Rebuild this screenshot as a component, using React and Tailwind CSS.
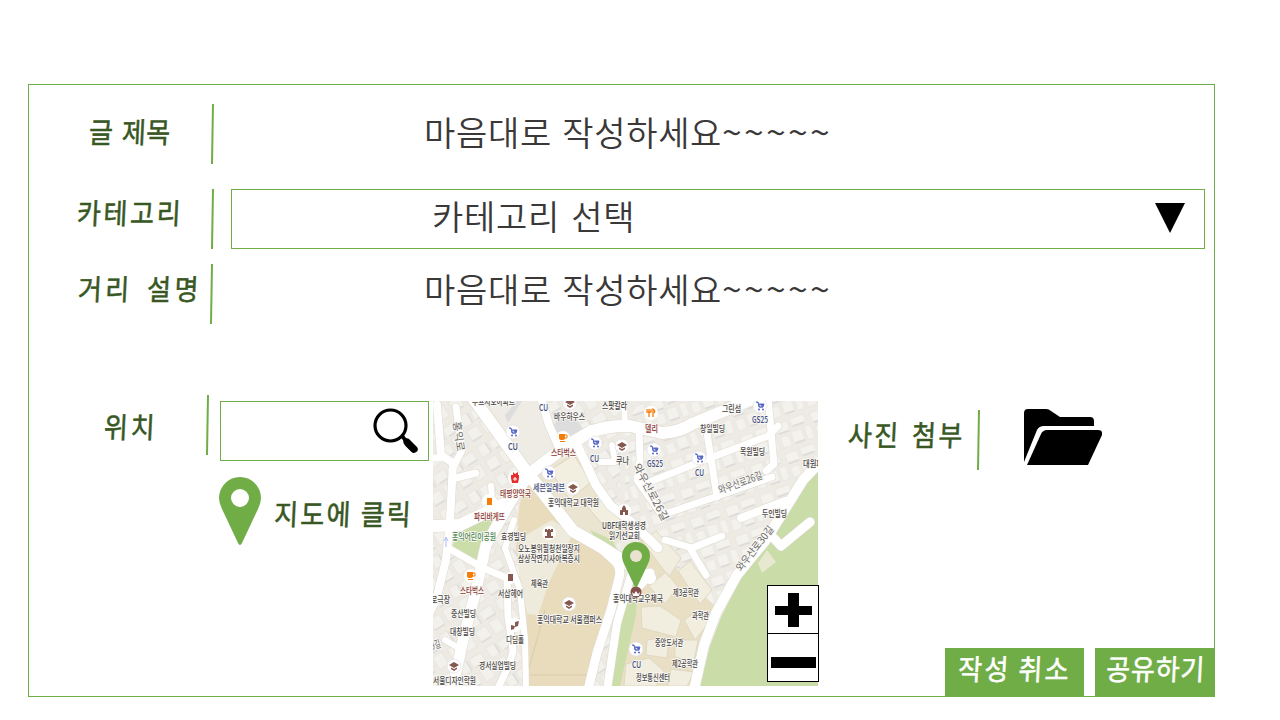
import React from "react";

const ROADS = [
  ["M473 398L526 471L573 531L603 548L650 578", 12],
  ["M603 550L614 560Q622 567 619 578L611 610L597 653L588 690", 9],
  ["M632 572L617 623L607 690", 8],
  ["M430 526L460 525L510 501L528 475L563 448L590 432Q610 425 630 426L662 433Q680 432 692 424L760 396", 12],
  ["M513 497L486 545L476 590L463 640L452 690", 11],
  ["M448 548L483 568L507 578L508 617L513 650Q512 660 497 690", 7],
  ["M514 520L505 548L520 590L525 640L526 690", 6],
  ["M541 398L549 425L560 450", 8],
  ["M577 445L596 485L610 505L630 521L658 548", 9],
  ["M437 405L441 455L453 463L450 520L446 560L436 600L430 612", 8],
  ["M456 407L462 450L452 470M452 479L476 473M430 458L441 458", 7],
  ["M491 486L492 498L500 507M445 640L462 650L458 670", 6],
  ["M639 430L640 459L637 480L662 515L712 498L772 477", 7],
  ["M642 485L702 461L768 436L778 426M707 433L717 497", 7],
  ["M768 398L774 464L766 471", 7],
  ["M741 518L785 501", 8],
  ["M590 428L625 426L624 400M612 445L615 462L600 462", 6],
  ["M665 540L692 548L722 536M691 550L706 575", 7],
  ["M822 460L803 480L785 509L765 541L737 575L716 613L704 645L694 690", 10],
  ["M769 533L781 546L810 522M640 585L650 573", 9],
];

const LABELS = [
  ["두프지오아파트", 472, 405, 43],
  ["CU", 539, 411, 9, "b"],
  ["바우하우스", 554, 420, 31],
  ["스팟칼라", 602, 409, 25],
  ["그린섬", 722, 412, 19],
  ["GS25", 752, 423, 16, "b"],
  ["CU", 508, 450, 10, "b"],
  ["스타벅스", 551, 456, 25, "r"],
  ["CU", 590, 462, 9, "b"],
  ["쿠나", 616, 464, 13],
  ["델리", 645, 432, 13, "r"],
  ["창일빌딩", 700, 432, 25],
  ["GS25", 647, 467, 16, "b"],
  ["CU", 695, 476, 9, "b"],
  ["목원빌딩", 740, 455, 25],
  ["대원파", 803, 467, 20],
  ["세븐일레븐", 533, 491, 32, "b"],
  ["태평양약국", 500, 497, 31, "r"],
  ["홍익대학교 대학원", 548, 506, 51],
  ["파리바게뜨", 474, 520, 31, "r"],
  ["UBF대학생성경", 602, 529, 44],
  ["읽기선교회", 609, 539, 31],
  ["두인빌딩", 762, 517, 25],
  ["홍익어린이공원", 452, 540, 44, "g"],
  ["효경빌딩", 501, 540, 25],
  ["오노봉위필청천일장지", 518, 552, 62],
  ["삼상작연지사아복증시", 518, 562, 62],
  ["체육관", 531, 587, 17],
  ["스타벅스", 460, 594, 24, "r"],
  ["서삽헤어", 498, 597, 25],
  ["로극장", 431, 603, 19],
  ["중산빌딩", 451, 617, 25],
  ["대창빌딩", 450, 635, 25],
  ["디딤홀", 506, 643, 18],
  ["홍익대학교 서울캠퍼스", 537, 623, 65],
  ["경서실업빌딩", 479, 669, 37],
  ["서울디자인학원", 433, 684, 43],
  ["홍익대학교우체국", 613, 602, 50],
  ["제3공학관", 673, 596, 26],
  ["과학관", 692, 619, 17],
  ["중앙도서관", 655, 646, 28],
  ["제2공학관", 672, 667, 26],
  ["CU", 632, 668, 9, "b"],
  ["정보통신센터", 636, 681, 34],
];

const INK = { b: "#414c7d", r: "#8c3a38", g: "#4d8550", k: "#494745" };

const STREETS = [
  ["홍익로", 453, 422, 30, 82],
  ["와우산로26길", 633, 466, 63, 62],
  ["와우산로26길", 720, 494, 46, -20],
  ["와우산로30길", 741, 572, 54, -52],
  ["9길", 432, 650, 10, -18],
];

const CARTS = [[513, 432], [595, 443], [549, 473], [760, 406], [654, 450], [699, 458], [636, 649]];
const SCHOOLS = [[570, 403], [622, 446], [573, 488], [569, 604], [454, 666]];
const CUPS = [[563, 438], [471, 576]];

function CityMap() {
  return (
    <svg className="block h-[285px] w-[385px]" viewBox="433 401 385 285" fontFamily='"Noto Sans CJK KR", sans-serif'>
      <defs>
        <pattern id="blocksA" width="37" height="31" patternUnits="userSpaceOnUse" patternTransform="rotate(-19)">
          <path d="M2 3h13v10H2zM18 2h15v8H18zM3 17h9v11H3zM15 15h11v12H15zM29 14h7v14h-7z" fill="#f4f2ed" stroke="#e5e2dc" strokeWidth=".7" />
          <path d="M3 13h11M19 10h12M16 27h10" stroke="#cfced2" strokeWidth="1" />
        </pattern>
        <pattern id="blocksB" width="33" height="35" patternUnits="userSpaceOnUse" patternTransform="rotate(-32)">
          <path d="M2 2h10v12H2zM15 3h14v10H15zM2 18h12v12H2zM18 17h11v14H18z" fill="#f3f1eb" stroke="#e2dfd8" strokeWidth=".7" />
          <path d="M12 3v11M18 13h11M2 30h11" stroke="#d4d3d6" strokeWidth="1" />
        </pattern>
      </defs>
      <rect x="433" y="401" width="385" height="285" fill="#eeebe5" />
      <path d="M433 401H620V686H433Z" fill="url(#blocksB)" />
      <path d="M625 425L640 401H818V520L700 640L625 530Z" fill="url(#blocksA)" />
      <path d="M487 401H541L556 447L526 468Z" fill="#efece5" />
      <path d="M505 415L517 401H522L508 423ZM553 425L569 410L584 430L564 441Z" fill="#deddde" />
      <path d="M533 476L577 450L630 530L614 545L574 530Z" fill="#eae4d1" />
      <path d="M550 470L574 455L591 482L570 500ZM586 505L600 493L621 521L609 532Z" fill="#f2eee0" stroke="#ded6bf" />
      <path d="M526 480L570 533L600 550L617 571L608 616L590 686H528L527 620L516 550L519 507Z" fill="#e8dcbc" />
      <path d="M521 538L552 520L573 534L550 580L538 615L527 614L517 560Z" fill="#eeebdd" />
      <path d="M545 610L528 672M528 675H588" stroke="#d9ccab" fill="none" />
      <path d="M640 535L716 607L693 686H610L632 590Z" fill="#e9dfc5" />
      <path d="M642 541L656 531L681 558L669 577ZM678 571L690 561L712 590L700 604ZM649 586L666 572L678 587L665 604ZM641 607L660 606L681 620L676 637L642 628ZM684 620L700 609L711 620L695 640ZM647 640L669 637L667 658L646 655ZM675 640L698 640L694 662L675 657ZM626 664L649 658L664 671L656 686H624ZM671 669L694 672L687 686H668Z" fill="#f2eedf" stroke="#dfd8c3" />
      <path d="M459 529L500 512L484 548L476 562L451 550Z" fill="#cbdda8" />
      <path d="M590 530L612 540L618 551L600 545ZM626 581L638 574L636 615L620 686H609L616 635Z" fill="#cbdda8" />
      <path d="M818 470L803 487L785 515L767 545L740 580L722 615L710 646L700 686H818Z" fill="#cadca7" />
      <path d="M758 563L767 550L776 562L762 573Z" fill="#e6e8d0" />
      <g fill="none" strokeLinecap="round" strokeLinejoin="round">
        {ROADS.map(([d, w]) => <path key={d} d={d} stroke="#dfdcd2" strokeWidth={w + 1.2} />)}
        {ROADS.map(([d, w]) => <path key={d} d={d} stroke="#fff" strokeWidth={w} />)}
      </g>
      <path d="M446 547v-9m-2 3 2-4 2 4" stroke="#a8bdf3" fill="none" />
      {CARTS.map(([x, y]) => (
        <g key={x + "-" + y} transform={`translate(${x} ${y})`}>
          <circle r="7" fill="#fff" stroke="#e3e0e2" strokeWidth=".7" />
          <path d="M-4-4h2l1.5 5H3M-1.5-2H4L3 1H-1Z" fill="#5968c5" stroke="#5968c5" />
          <circle cx="-1" cy="3.5" r="1" fill="#5968c5" /><circle cx="3" cy="3.5" r="1" fill="#5968c5" />
        </g>
      ))}
      {SCHOOLS.map(([x, y]) => (
        <g key={x + "-" + y} transform={`translate(${x} ${y})`}>
          <circle r="7" fill="#fff" stroke="#e3e0e2" strokeWidth=".7" />
          <path d="M-5-1L0-4L5-1L0 2ZM-3 1.500L0 3L3 1.500V3L0 5L-3 3Z" fill="#85594f" />
        </g>
      ))}
      {CUPS.map(([x, y]) => (
        <g key={x} transform={`translate(${x} ${y})`}>
          <circle r="7" fill="#fff" />
          <path d="M-4-4H2V0Q2 2-1 2Q-4 2-4 0ZM-3 3H2V4H-3Z" fill="#f77d0b" />
          <path d="M2-3H4V0H2" fill="none" stroke="#f77d0b" />
        </g>
      ))}
      <circle cx="515" cy="478" r="7" fill="#fff" />
      <path d="M511 475h8v3l-1 5h-6l-1-5ZM513 472l2 2 3-2v3h-5Z" fill="#e52e2b" />
      <path d="M515 477v4m-2-2h4" stroke="#fff" />
      <circle cx="489" cy="501" r="7" fill="#fff" />
      <rect x="487" y="498" width="5" height="7" fill="#f77d0b" />
      <circle cx="651" cy="413" r="7" fill="#fff" />
      <path d="M649 409v8m-2-8v3h4v-3m2 8v-8q3 2 1 4" stroke="#f77d0b" strokeWidth="1.3" fill="none" />
      <circle cx="549" cy="533" r="7" fill="#fff" />
      <path d="M545 529h2v1h1v-1h2v1h1v-1h2v3h-2v4h2v2h-8v-2h2v-4h-2Z" fill="#85594f" />
      <circle cx="624" cy="511" r="7" fill="#fff" />
      <path d="M620 515v-5h2v-2l2-3 2 3v2h2v5h-3v-3h-2v3Z" fill="#85594f" />
      <circle cx="511" cy="578" r="6" fill="#fff" />
      <rect x="508" y="574" width="5" height="7" fill="#85594f" />
      <circle cx="515" cy="625" r="7" fill="#fff" />
      <path d="M515 622l4-1-1 5-3 1ZM511 625l4 1-1 3-3 1Z" fill="#85594f" />
      {STREETS.map(([t, x, y, w, r], i) => (
        <text key={i} x={x} y={y} transform={`rotate(${r} ${x} ${y})`} fontSize="10.5" textLength={w} lengthAdjust="spacingAndGlyphs" fill="#6b6968" stroke="#faf9f6" strokeWidth="2" paintOrder="stroke">{t}</text>
      ))}
      {LABELS.map(([t, x, y, w, c], i) => (
        <text key={i} x={x} y={y} fontSize="9.5" fontWeight="500" textLength={w} lengthAdjust="spacingAndGlyphs" fill={INK[c || "k"]} stroke="#faf9f6" strokeWidth="1.8" paintOrder="stroke">{t}</text>
      ))}
      <circle cx="636" cy="592" r="5.500" fill="#85504b" />
      <path d="M632 592l2 2 2-3 2 3 2-2-1 4h-6Z" fill="#fff" />
      <path d="M622 556A14 14 0 0 1 650 556Q650 560 647 566L637.500 586Q636 588.500 634.500 586L625 566Q622 560 622 556Z" fill="#70ad47" />
      <circle cx="636" cy="556" r="6" fill="#e9e2d0" />
    </svg>
  );
}

function Divider({ className = "" }) {
  return (
    <svg className={"h-[60px] w-[3px] shrink-0 " + className} viewBox="0 0 3 60">
      <path d="M2 0L1 60" stroke="#70ad47" strokeWidth="2" />
    </svg>
  );
}

function Label({ children, className = "" }) {
  return (
    <span className={"block shrink-0 -skew-x-3 scale-y-110 whitespace-pre text-[26px] leading-[30px] font-normal [-webkit-text-stroke:0.5px_currentColor] " + className}>
      {children}
    </span>
  );
}

function Placeholder() {
  return (
    <p className="-mt-[2px] ml-[210px] text-[34px] leading-[60px] font-[350] whitespace-pre tracking-[0.7px] text-[#3b3838] [word-spacing:2px]">
      마음대로 작성하세요<span className="text-[36px] leading-[20px] tracking-[2.2px]">~~~~~</span>
    </p>
  );
}

export default function App() {
  return (
    <main className="h-[720px] w-[1280px] overflow-hidden bg-white pt-[84px] pl-7 font-['Noto_Sans_CJK_KR',sans-serif]">
      <section className="flex h-[613px] w-[1187px] flex-col border border-[#70ad47] text-[#385723]">
        <div className="mt-[19px] flex h-[60px]">
          <div className="w-[182px] pt-3 pl-[60px]"><Label className="tracking-[0.2px] [word-spacing:3px]">글 제목</Label></div>
          <Divider />
          <Placeholder />
        </div>
        <div className="mt-[25px] flex h-[60px]">
          <div className="w-[182px] pt-2 pl-[48px]"><Label className="tracking-[2.7px]">카테고리</Label></div>
          <Divider />
          <button className="ml-[17px] flex w-[974px] items-center justify-between border border-[#70ad47] pr-[19px] pl-[200px]">
            <span className="-mt-[7px] text-[34px] leading-[50px] font-[350] tracking-[0.7px] whitespace-pre text-[#3b3838] [word-spacing:3px]">카테고리 선택</span>
            <svg className="-mt-[3px] h-[30px] w-[30px]" viewBox="0 0 30 30"><path d="M0 0H30L15 30Z" fill="#000" /></svg>
          </button>
        </div>
        <div className="mt-[15px] flex h-[60px]">
          <div className="w-[181px] pt-[9px] pl-[49px]"><Label className="tracking-[3.5px] [word-spacing:5px]">거리 설명</Label></div>
          <Divider />
          <div className="-mt-[3px] ml-px"><Placeholder /></div>
        </div>
        <div className="mt-[71px] flex h-[301px]">
          <div className="w-[178px] shrink-0 pt-[16px] pl-[75px]"><Label className="tracking-[3px]">위치</Label></div>
          <Divider className="-ml-px" />
          <div className="mt-[6px] ml-[11px] w-[209px] shrink-0">
            <div className="flex h-[60px] w-[209px] items-center justify-end border border-[#70ad47] pr-[9px]">
              <svg className="h-[48px] w-[48px]" viewBox="0 0 48 48">
                <circle cx="19.500" cy="18.500" r="15.500" fill="none" stroke="#000" strokeWidth="3.200" />
                <path d="M29 30L32 27L35 31Q38 31 40 34L45.500 39.500Q48 42 46 44.500Q43 47 40.500 45L34 38.500Q32 36 32 33Z" fill="#000" />
              </svg>
            </div>
            <div className="mt-[15px] flex">
              <svg className="-ml-px h-[70px] w-[42px] shrink-0" viewBox="0 0 42 70">
                <path fillRule="evenodd" d="M0 22A21 21 0 0 1 42 22Q42 27 39 33L23 67Q21 71 19 67L3 33Q0 27 0 22ZM12 22A9 9 0 1 0 30 22A9 9 0 1 0 12 22Z" fill="#70ad47" />
              </svg>
              <Label className="mt-[23px] ml-[13px] tracking-[2.2px]">지도에 클릭</Label>
            </div>
          </div>
          <div className="relative mt-[6px] ml-1 h-[285px] w-[385px] shrink-0">
            <CityMap />
            <div className="absolute -right-px bottom-1 flex h-[97px] w-[52px] flex-col border border-black bg-white">
              <button className="flex h-12 items-center justify-center border-b border-black">
                <svg className="h-[34px] w-[37px]" viewBox="0 0 37 34"><path d="M13 0H24V13H37V22H24V34H13V22H0V13H13Z" fill="#000" /></svg>
              </button>
              <button className="flex flex-1 items-center justify-center pt-[10px]">
                <svg className="h-[11px] w-[45px]" viewBox="0 0 45 11"><path d="M0 0H45V11H0Z" fill="#000" /></svg>
              </button>
            </div>
          </div>
          <div className="flex h-[302px] w-[397px] shrink-0 flex-col justify-between">
            <div className="mt-[15px] flex h-[60px]">
              <div className="w-[159px] pt-[9px] pl-[30px]"><Label className="tracking-[2.5px] [word-spacing:3px]">사진 첨부</Label></div>
              <Divider />
              <svg className="-mt-px ml-[44px] h-[56px] w-[78px]" viewBox="0 0 78 56" fill="#000">
                <path d="M0 4Q0 0 4 0H22Q25 0 27 2L36 8H66Q70 8 70 12V17H20Q15 17 13 21L0 53Z" />
                <path d="M3 56L17 25Q19 21 23 21H74Q79 21 78 26L64 56Z" />
              </svg>
            </div>
            <div className="flex h-[49px] gap-[11px] pl-[127px]">
              <button className="flex w-[139px] justify-center bg-[#70ad47] pt-[6px] text-white"><Label className="tracking-[2.2px]">작성 취소</Label></button>
              <button className="flex w-[120px] justify-center bg-[#70ad47] pt-[6px] text-white"><Label className="tracking-[0.800px]">공유하기</Label></button>
            </div>
          </div>
        </div>
      </section>
    </main>
  );
}
